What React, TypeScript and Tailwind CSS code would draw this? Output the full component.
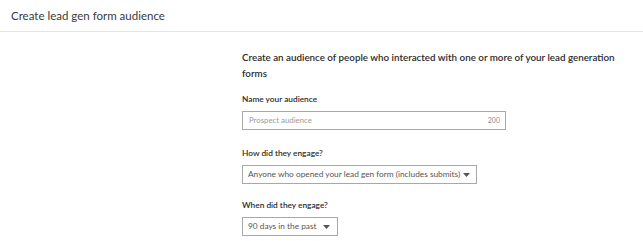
function Caret() {
  return (
    <svg width="7" height="4" viewBox="0 0 7 4" className="shrink-0">
      <path d="M0 0 L7 0 L3.5 4 Z" fill="#555" />
    </svg>
  );
}

export default function App() {
  return (
    <div
      className="w-[643px] h-[241px] bg-white overflow-hidden text-[#333]"
      style={{ fontFamily: 'Lato, "Open Sans", sans-serif' }}
    >
      {/* header */}
      <div className="h-[32px] border-b border-[#e5e5e5] flex items-center pl-[11px]">
        <h1 className="text-[11.5px] text-[#3a3a3a]">Create lead gen form audience</h1>
      </div>

      {/* form */}
      <div className="pl-[242px] pt-[17px] pr-[20px]">
        <p className="text-[9.8px] font-semibold leading-[16px] text-[#2b2b2b] w-[375px]">
          Create an audience of people who interacted with one or more of your lead generation forms
        </p>

        <label className="block mt-[12px] text-[8.3px] font-semibold leading-[12px] text-[#2b2b2b]">
          Name your audience
        </label>
        <div className="mt-[6px] w-[264px] h-[19px] border border-[#a8a8a8] flex items-center justify-between pl-[6px] pr-[5px]">
          <span className="text-[7.8px] text-[#9a9a9a]">Prospect audience</span>
          <span className="text-[7px] text-[#8a8a8a]">200</span>
        </div>

        <label className="block mt-[17px] text-[8.3px] font-semibold leading-[12px] text-[#2b2b2b]">
          How did they engage?
        </label>
        <div className="mt-[6px] w-[235px] h-[19px] border border-[#a8a8a8] flex items-center justify-between pl-[5px] pr-[6px]">
          <span className="text-[8.3px] text-[#555] whitespace-nowrap">
            Anyone who opened your lead gen form (includes submits)
          </span>
          <Caret />
        </div>

        <label className="block mt-[15px] text-[8.3px] font-semibold leading-[12px] text-[#2b2b2b]">
          When did they engage?
        </label>
        <div className="mt-[6px] w-[96px] h-[19px] border border-[#a8a8a8] flex items-center justify-between pl-[5px] pr-[7px]">
          <span className="text-[8.3px] text-[#555] whitespace-nowrap">90 days in the past</span>
          <Caret />
        </div>
      </div>
    </div>
  );
}
